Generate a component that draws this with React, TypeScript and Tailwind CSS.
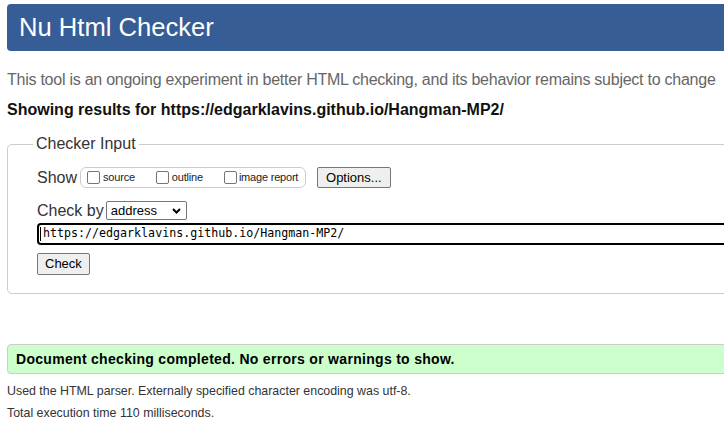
const Box = () => (
  <span className="inline-block w-[13px] h-[13px] border border-[#767676] rounded-[2px] bg-white shrink-0" />
);

const App = () => {
  return (
    <div className="w-[724px] h-[423px] overflow-hidden bg-white font-['Liberation_Sans',Arial,sans-serif] text-[#333]">
      <div className="w-[760px] pl-[7px]">
        <header className="mt-[4px] h-[47px] bg-[#365d95] rounded-[4px] pl-[12px] text-white text-[25.6px] leading-[47px]">
          Nu Html Checker
        </header>

        <p className="mt-[20px] text-[16px] leading-[18px] tracking-[-0.25px] text-[#666] whitespace-nowrap">
          This tool is an ongoing experiment in better HTML checking, and its behavior remains subject to change
        </p>
        <p className="mt-[12px] text-[16px] leading-[18px] font-bold text-[#111] whitespace-nowrap">
          Showing results for https://edgarklavins.github.io/Hangman-MP2/
        </p>

        <fieldset className="mt-[16px] w-[740px] border border-[#ccc] rounded-[5px] pl-[29px] pt-[14px] pb-[18px]">
          <legend className="ml-[-4px] px-[3px] text-[16px] leading-[18px] text-[#333]">Checker Input</legend>

          <div className="flex items-center h-[21px]">
            <span className="text-[16px] leading-[18px]">Show</span>
            <div className="ml-[3px] w-[226px] h-[21px] border border-[#ccc] rounded-[6px] flex items-center pl-[6px] text-[11px] tracking-[-0.2px] text-[#222] whitespace-nowrap">
              <Box />
              <span className="ml-[3px]">source</span>
              <span className="ml-[21px] flex"><Box /></span>
              <span className="ml-[3px]">outline</span>
              <span className="ml-[21px] flex"><Box /></span>
              <span className="ml-[2px]">image report</span>
            </div>
            <button className="ml-[11px] h-[21px] px-[8px] bg-[#efefef] border border-[#767676] rounded-[2px] text-[13px] text-black">
              Options...
            </button>
          </div>

          <div className="mt-[13px] flex items-center h-[19px]">
            <span className="text-[16px] leading-[18px]">Check by</span>
            <div className="ml-[2px] w-[81px] h-[19px] border border-[#767676] rounded-[2px] flex items-center justify-between pl-[4px] pr-[5px] text-[13px] text-black">
              <span>address</span>
              <svg width="9" height="6" viewBox="0 0 9 6" fill="none">
                <path d="M1 1l3.5 3.5L8 1" stroke="#000" strokeWidth="2" />
              </svg>
            </div>
          </div>

          <div className="mt-[3px] w-[720px] h-[22px] border-2 border-black rounded-[4px] flex items-center pl-[1px] font-['DejaVu_Sans_Mono',monospace] text-[11.65px] text-black">
            <span className="w-[1px] h-[14px] bg-black" />
            <span className="ml-[2px]">https://edgarklavins.github.io/Hangman-MP2/</span>
          </div>

          <button className="mt-[8px] block h-[22px] px-[7px] bg-[#efefef] border border-[#767676] rounded-[2px] text-[13px] text-black">
            Check
          </button>
        </fieldset>

        <div className="mt-[50px] h-[30px] border border-[#ccc] rounded-[4px] bg-[#ccffcc] pl-[8px] text-[14px] leading-[28px] font-bold tracking-[0.3px] text-black">
          Document checking completed. No errors or warnings to show.
        </div>

        <div className="mt-[6px] text-[12.4px] leading-[22px] text-[#333]">
          <p>Used the HTML parser. Externally specified character encoding was utf-8.</p>
          <p>Total execution time 110 milliseconds.</p>
        </div>
      </div>
    </div>
  );
};

export default App;
